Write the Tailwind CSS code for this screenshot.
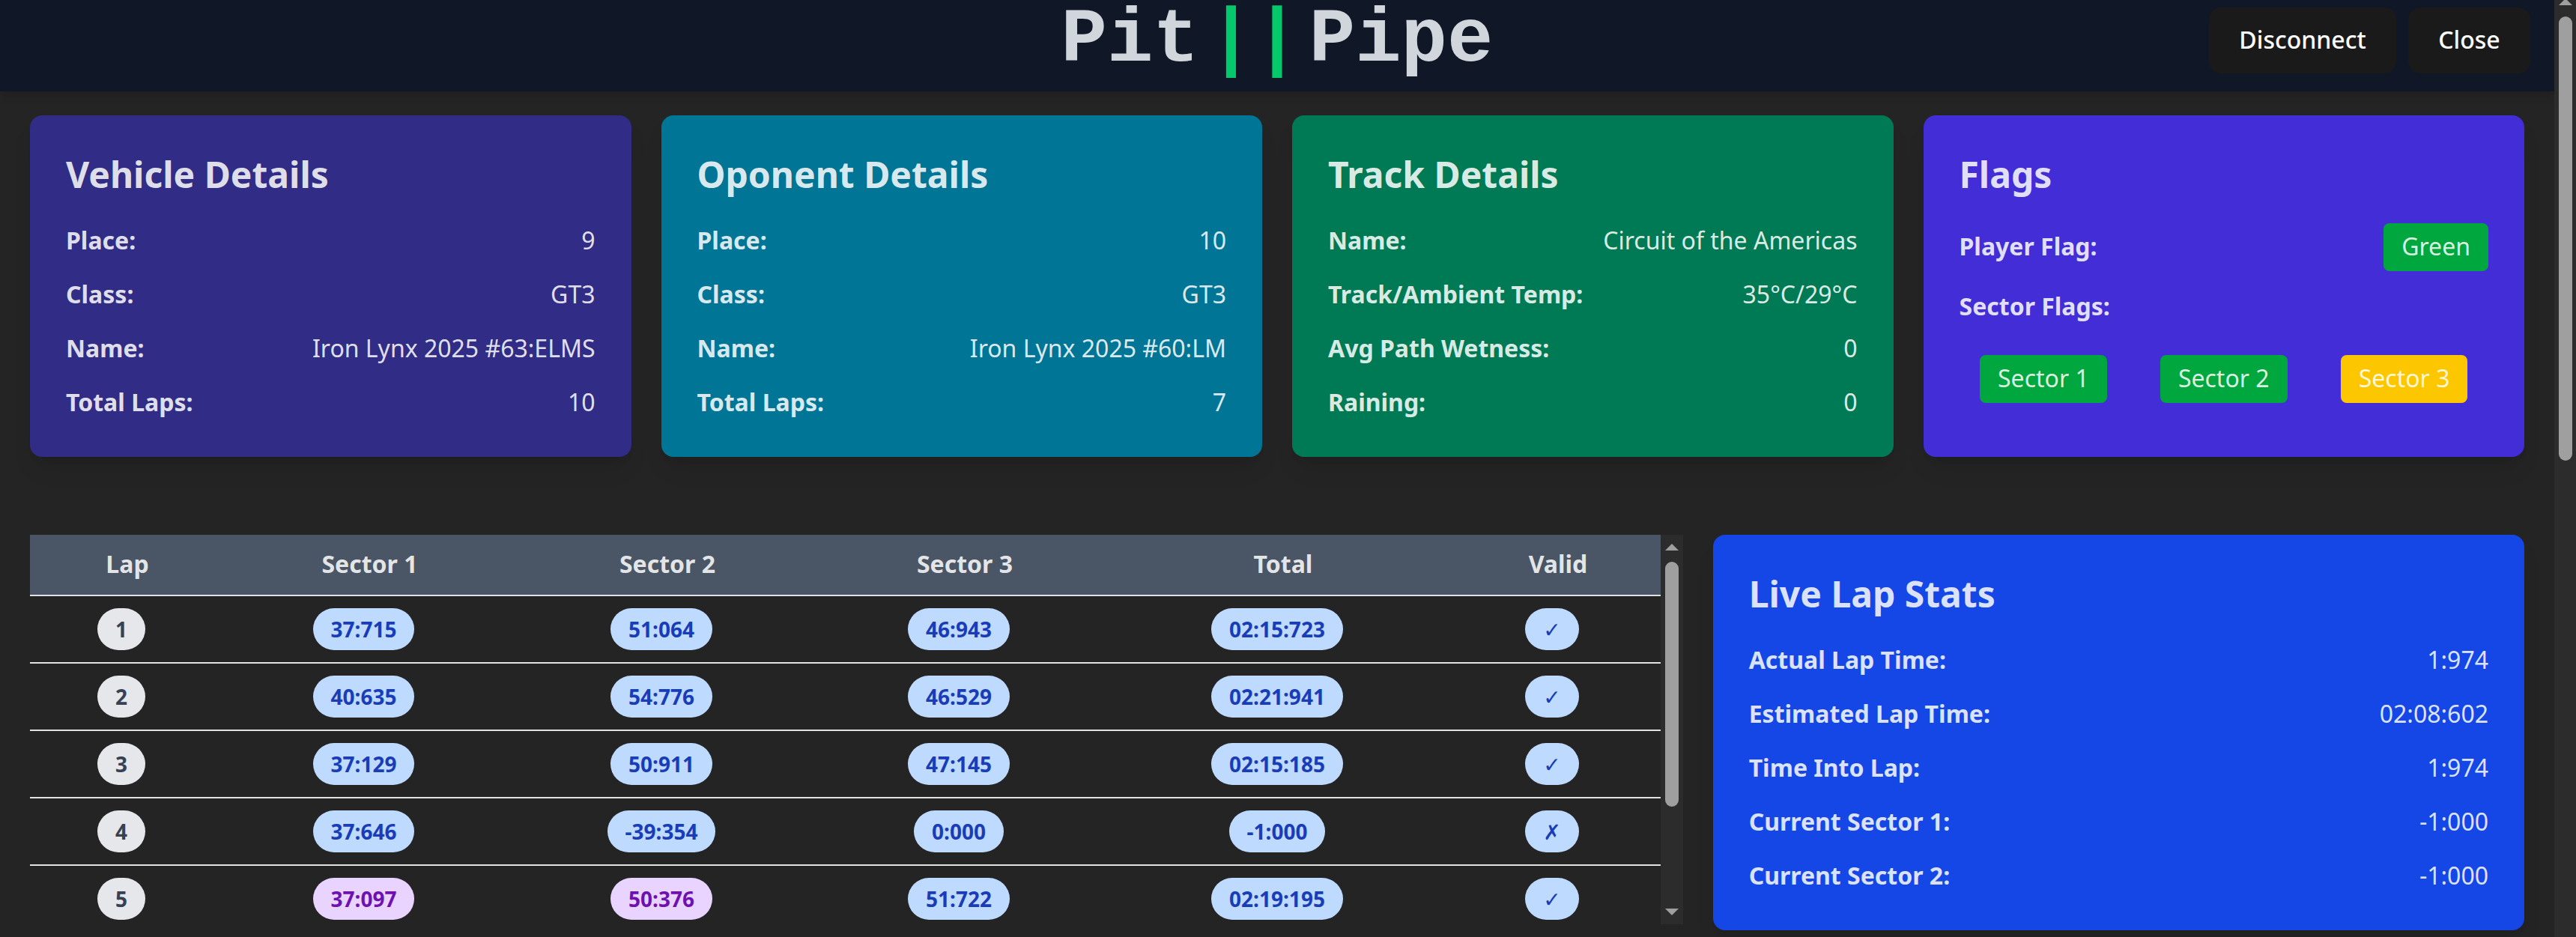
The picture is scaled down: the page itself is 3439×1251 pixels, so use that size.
<!DOCTYPE html>
<html lang="en">
<head>
<meta charset="utf-8">
<title>Pit||Pipe</title>
<script src="https://cdn.jsdelivr.net/npm/@tailwindcss/browser@4"></script>
</head>
<body class="flex h-[1251px] w-[3439px] overflow-hidden bg-[#242424] font-['Noto_Sans','DejaVu_Sans',sans-serif] text-[32px] leading-[45px] text-white/87">
<div class="flex h-full w-[3410px] flex-col">
  <header class="grid h-[122px] shrink-0 grid-cols-[1fr_auto_1fr] items-start bg-gray-900 px-8 shadow-[0_8px_12px_-2px_rgb(0_0_0/0.1),0_4px_8px_-4px_rgb(0_0_0/0.1)]">
    <div></div>
    <h1 class="font-['Liberation_Mono',monospace] text-[102.4px] leading-[108px] font-bold text-gray-300">Pit<span class="mx-3 text-[#05c86a]">||</span>Pipe</h1>
    <div class="flex justify-end gap-4 pt-[10px] font-medium text-white">
      <button class="h-[88px] w-[250px] rounded-2xl bg-[#1a1a1a] pb-[3px]">Disconnect</button>
      <button class="h-[88px] w-[163px] rounded-2xl bg-[#1a1a1a] pb-[3px]">Close</button>
    </div>
  </header>
  <main class="px-10 pt-8">
    <section id="cards" class="grid grid-cols-4 gap-10"></section>
    <section class="mt-[104px] grid grid-cols-3 items-start gap-10">
      <div class="col-span-2 flex h-[520px] overflow-hidden">
        <table class="w-[2177px] shrink-0 table-fixed border-separate border-spacing-0 self-start text-center">
          <colgroup><col class="w-[260px]"><col class="w-[387px]"><col class="w-[408px]"><col class="w-[386px]"><col class="w-[464px]"><col class="w-[272px]"></colgroup>
          <thead class="bg-gray-600">
            <tr>
              <th class="h-[82px] border-b-2 border-[#e2e2e2] p-0 pb-[3px] font-bold">Lap</th>
              <th class="border-b-2 border-[#e2e2e2] p-0 pb-[3px] font-bold">Sector 1</th>
              <th class="border-b-2 border-[#e2e2e2] p-0 pb-[3px] font-bold">Sector 2</th>
              <th class="border-b-2 border-[#e2e2e2] p-0 pb-[3px] font-bold">Sector 3</th>
              <th class="border-b-2 border-[#e2e2e2] p-0 pb-[3px] font-bold">Total</th>
              <th class="border-b-2 border-[#e2e2e2] p-0 pr-[2px] pb-[3px] font-bold">Valid</th>
            </tr>
          </thead>
          <tbody id="laps"></tbody>
        </table>
        <div class="flex w-[30px] shrink-0 flex-col items-center bg-[#2c2c2c] pt-3">
          <svg class="h-[9px] w-[18px]" viewBox="0 0 18 9"><path d="M9 0L18 9H0Z" fill="#9f9f9f"/></svg>
          <div class="mt-[15px] h-[327px] w-[18px] rounded-full bg-[#9f9f9f]"></div>
          <svg class="mt-auto mb-3 h-[9px] w-[18px]" viewBox="0 0 18 9"><path d="M0 0H18L9 9Z" fill="#9f9f9f"/></svg>
        </div>
      </div>
      <div id="live"></div>
    </section>
  </main>
</div>
<div class="flex h-full w-[29px] flex-col items-start bg-[#2c2c2c] pl-[6px]">
  <svg class="h-[7px] w-[18px] shrink-0" viewBox="0 2 18 7"><path d="M9 0L18 9H0Z" fill="#9f9f9f"/></svg>
  <div class="mt-[15px] h-[593px] w-[18px] rounded-full bg-[#9f9f9f]"></div>
</div>
<script>
const shadow = 'rounded-2xl p-12 shadow-[0_20px_30px_-6px_rgb(0_0_0/0.1),0_8px_12px_-8px_rgb(0_0_0/0.1)]';
const title = t => `<h2 class="mb-8 pb-[3px] text-[48px] leading-[61px] font-bold">${t}</h2>`;
const row = ([k, v]) => `<div class="flex justify-between pb-[3px]"><span class="font-bold">${k}:</span><span>${v}</span></div>`;
const card = (bg, t, rows) => `<article class="${bg} ${shadow}">${title(t)}<div class="flex flex-col gap-6">${rows.map(row).join('')}</div></article>`;
const badge = (bg, t) => `<span class="${bg} rounded-lg px-6 pt-2 pb-[11px]">${t}</span>`;
document.getElementById('cards').innerHTML =
  card('bg-indigo-900', 'Vehicle Details', [['Place', 9], ['Class', 'GT3'], ['Name', 'Iron Lynx 2025 #63:ELMS'], ['Total Laps', 10]]) +
  card('bg-cyan-700', 'Oponent Details', [['Place', 10], ['Class', 'GT3'], ['Name', 'Iron Lynx 2025 #60:LM'], ['Total Laps', 7]]) +
  card('bg-emerald-700', 'Track Details', [['Name', 'Circuit of the Americas'], ['Track/Ambient Temp', '35°C/29°C'], ['Avg Path Wetness', 0], ['Raining', 0]]) +
  `<article class="bg-indigo-700 ${shadow}">${title('Flags')}
    <div class="mb-6 flex items-center justify-between"><span class="pb-[3px] font-bold">Player Flag:</span>${badge('bg-green-600', 'Green')}</div>
    <div class="pb-[3px] font-bold">Sector Flags:</div>
    <div class="mt-10 grid grid-cols-3 justify-items-center gap-4">${badge('bg-green-600', 'Sector 1')}${badge('bg-green-600', 'Sector 2')}${badge('bg-yellow-400', 'Sector 3')}</div>
  </article>`;
document.getElementById('live').outerHTML = card('bg-blue-700', 'Live Lap Stats', [['Actual Lap Time', '1:974'], ['Estimated Lap Time', '02:08:602'], ['Time Into Lap', '1:974'], ['Current Sector 1', '-1:000'], ['Current Sector 2', '-1:000']]);

const tones = { gray: 'bg-gray-200 text-gray-700', blue: 'bg-blue-200 text-blue-800', best: 'bg-purple-200 text-purple-800' };
const laps = [
  ['1', '37:715', '51:064', '46:943', '02:15:723', '✓'],
  ['2', '40:635', '54:776', '46:529', '02:21:941', '✓'],
  ['3', '37:129', '50:911', '47:145', '02:15:185', '✓'],
  ['4', '37:646', '-39:354', '0:000', '-1:000', '✗'],
  ['5', '*37:097', '*50:376', '51:722', '02:19:195', '✓'],
];
document.getElementById('laps').innerHTML = laps.map(l => '<tr>' + l.map((v, i) => {
  const tone = i === 0 ? tones.gray : v[0] === '*' ? tones.best : tones.blue;
  return `<td class="h-[90px] border-b-2 border-[#e2e2e2] p-0 last:pr-[2px]"><div class="flex justify-center"><span class="mr-4 rounded-full px-6 py-2 text-[28px] leading-[40px] font-bold ${tone}">${v.replace('*', '')}</span></div></td>`;
}).join('') + '</tr>').join('');
</script>
</body>
</html>
